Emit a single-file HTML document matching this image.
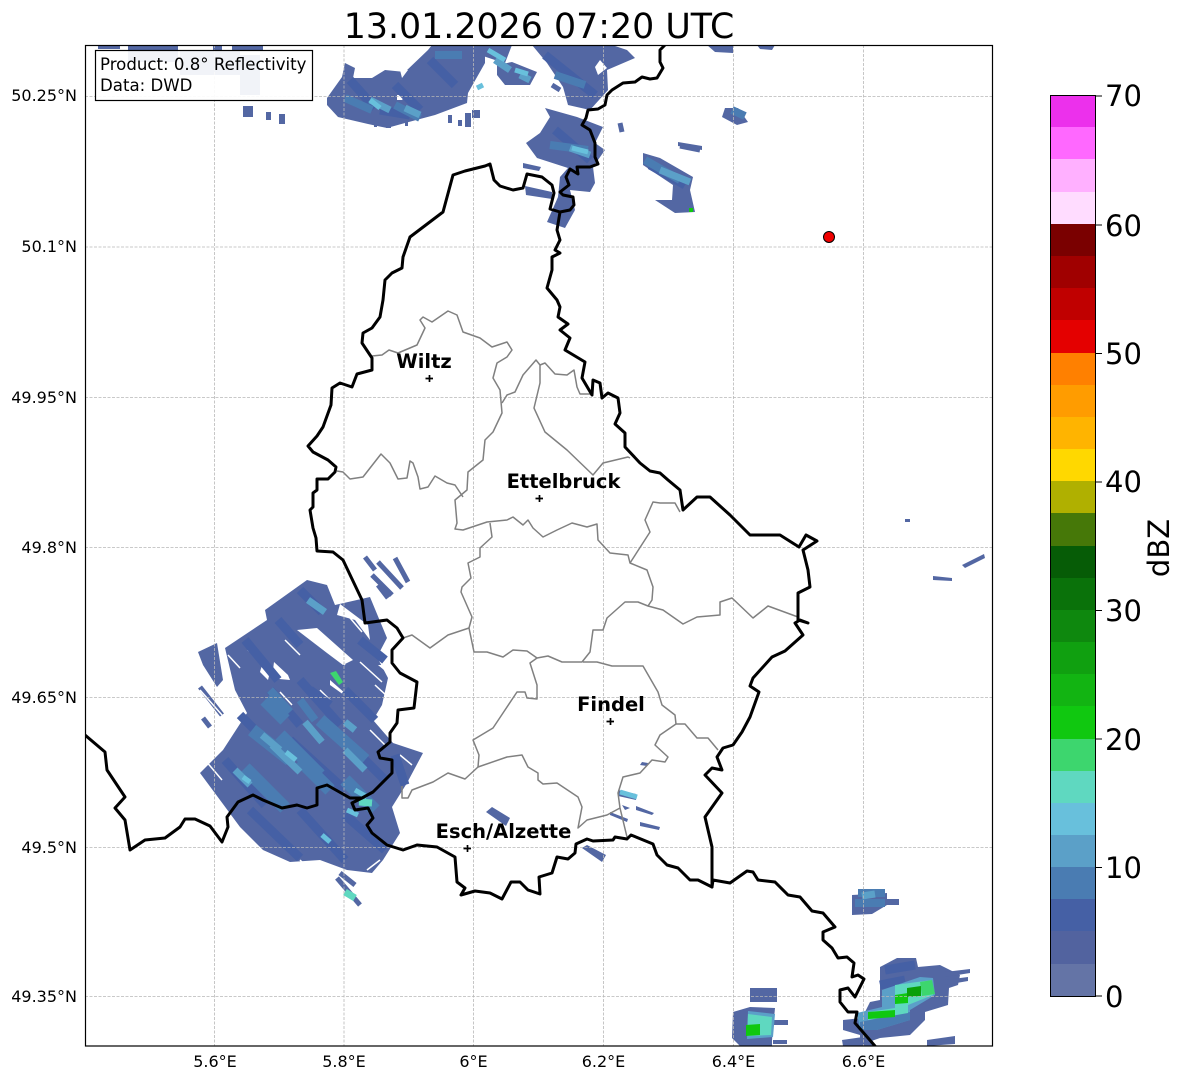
<!DOCTYPE html>
<html><head><meta charset="utf-8"><style>
html,body{margin:0;padding:0;background:#fff}
svg{display:block}
text{font-family:"DejaVu Sans",sans-serif;fill:#000}
</style></head><body>
<svg xmlns="http://www.w3.org/2000/svg" width="1184" height="1081" viewBox="0 0 1184 1081">
<defs><clipPath id="c"><rect x="85" y="45" width="907" height="1001"/></clipPath></defs>
<text x="539" y="38" text-anchor="middle" font-size="34.8">13.01.2026 07:20 UTC</text>
<g clip-path="url(#c)">
<!-- radar base -->
<g fill="#5367a3">
<path d="M307 580L327 585L335 605L370 597L387 638L377 657L388 678L382 705L373 720L393 743L423 753L407 783L392 807L400 833L383 860L372 873L347 870L320 860L290 862L263 850L240 827L200 773L223 750L247 713L235 690L225 648L267 620L265 610Z"/>
<path d="M198 652L217 643L223 680L217 687L203 665Z"/>
<path d="M327 98L342 77L345 63L355 68L353 78L372 78L385 70L405 72L428 50L432 45L485 45L485 63L468 93L467 103L435 115L405 123L387 128L368 124L338 117L327 105Z"/>
<path d="M480 45L512 45L505 63L495 60L480 55Z"/>
<path d="M497 65L512 62L537 72L530 85L505 85L497 75Z"/>
<path d="M532 45L612 45L627 50L635 58L607 70L608 90L590 110L568 105L563 87L547 63Z"/>
<path d="M545 108L577 117L603 127L595 143L605 150L593 167L595 183L590 192L570 190L575 210L565 228L547 222L558 197L560 177L568 168L537 158L526 143L540 133L550 117Z"/>
<path d="M523 163L541 167L539 171L523 168Z"/>
<path d="M525 186L552 192L552 199L526 195Z"/>
<path d="M643 153L660 158L693 177L690 190L695 212L675 213L655 200L672 200L673 185L643 165Z"/>
<path d="M678 142L702 146L702 150L678 146Z"/>
<path d="M722 117L725 108L738 108L748 122L737 125Z"/>
<path d="M707 45L733 45L733 53L715 52Z"/>
<path d="M757 45L775 45L772 50L760 49Z"/>
<rect x="98" y="45" width="22" height="4"/><rect x="128" y="45" width="50" height="5"/><rect x="213" y="45" width="9" height="5"/><rect x="232" y="45" width="31" height="5"/>
<rect x="243" y="106" width="10" height="11"/><rect x="266" y="112" width="5" height="8"/><rect x="279" y="114" width="6" height="10"/>
<rect x="448" y="115" width="4" height="8"/><rect x="458" y="120" width="4" height="6"/><rect x="465" y="113" width="6" height="14"/><rect x="472" y="110" width="8" height="8"/><rect x="374" y="120" width="3" height="7"/><rect x="386" y="120" width="5" height="8"/><rect x="405" y="118" width="3" height="8"/>
<rect x="128" y="50" width="50" height="12"/><rect x="180" y="50" width="60" height="25"/><rect x="240" y="55" width="20" height="40"/>
<path d="M852 895L887 893L887 905L872 914L852 915Z"/>
<rect x="886" y="899" width="13" height="6"/>
<path d="M880 967L897 958L916 958L918 967L940 965L960 975L958 985L949 988L948 1005L925 1012L925 1020L910 1035L880 1038L860 1045L860 1035L843 1030L843 1020L862 1018L870 1002L880 1000Z"/>
<path d="M733 1012L750 1007L775 1008L772 1040L772 1046L740 1046L732 1038Z"/>
<rect x="750" y="988" width="27" height="14"/>
<path d="M773 1020L788 1020L788 1025L773 1025ZM773 1040L787 1040L787 1044L773 1044Z"/>
<path d="M843 1046L842 1040L870 1036L875 1046Z"/>
<path d="M927 1040L955 1036L955 1044L927 1046Z"/>
<path d="M945 972L970 969L970 973L945 977ZM945 980L968 977L968 981L945 985Z"/>
<rect x="905" y="519" width="5" height="3"/><path d="M933 576L952 578L952 581L933 580Z"/><path d="M962 565L984 554L985 558L965 568Z"/>
<path d="M486 812L492 807L510 818L506 826Z"/><path d="M582 848L587 845L606 855L602 862Z"/>
<path d="M642 762L648 763L647 766L640 765Z"/><path d="M618 790L636 794L636 800L618 796Z"/><path d="M622 805L630 808L625 810Z"/><path d="M640 822L660 827L659 830L640 826Z"/><path d="M610 812L628 819L627 822L610 815Z"/><path d="M636 806L654 813L652 815L636 810Z"/>
</g>
<g fill="none" stroke="#5367a3" stroke-width="5">
<path d="M365 557L375 570M372 575L392 595M378 562L402 588M395 558L408 582M378 585L388 598"/>
<path d="M337 878L360 905M340 873L355 885"/>
<path d="M200 687L222 715M203 718L210 727"/>
<path d="M552 85L560 90M680 146L700 150M620 123L622 132"/>
</g>
<!-- holes -->
<g fill="#fff">
<path d="M297 630L317 628L353 660L343 665L327 653Z"/>
<path d="M262 665L270 672L268 680L260 672Z"/>
<path d="M274 662L288 675L290 680L279 679L273 670Z"/>
<path d="M330 680L346 694L344 695L330 685Z"/>
<path d="M337 615L340 604L368 625L370 640L355 620Z"/>
<path d="M378 665L392 665L384 670Z"/>
<path d="M400 70L408 70L402 78Z"/>
<path d="M397 95L406 95L402 100L397 100Z"/>
<path d="M612 85L625 85L615 100L607 92Z"/>
<path d="M600 60L607 68L598 75L595 67Z"/>
</g>
<g fill="none" stroke="#fff" stroke-width="1.5">
<path d="M325 642L345 665M285 640L300 655M248 650L262 660M280 692L292 705M370 730L385 745M380 612L395 630M400 755L412 765M367 870L380 860M200 690L222 715M360 585L378 600M360 662L382 682M320 690L330 700M345 612L362 632M375 685L388 697M228 655L240 668M372 712L382 722M205 760L222 780M245 840L262 855M300 860L318 878"/>
</g>
<!-- darker -->
<g fill="none" stroke="#4560a5" stroke-width="9">
<path d="M300 590L322 612M278 620L300 645M245 640L278 680M270 690L300 725M300 680L340 725M345 690L375 720M240 715L270 745M225 760L265 805M290 740L345 790M345 740L385 780M310 690L330 705M250 810L300 858M300 810L345 860M345 815L385 850M360 640L385 660M395 755L405 785"/>
<path d="M350 80L375 108M395 85L420 110M430 60L455 85M545 55L595 95M555 130L590 160M650 165L685 185M380 110L410 115"/>
<path d="M885 970L915 965M880 985L905 980"/>
</g>
<g fill="none" stroke="#4a7cb2" stroke-width="13">
<path d="M245 768L285 808M280 735L320 775M320 720L365 760M345 780L375 810M300 760L330 790M252 730L290 760M265 700L285 720"/>
</g>
<g fill="none" stroke="#4a7cb2" stroke-width="8">
<path d="M345 98L372 110M395 105L420 118M435 55L462 55M555 75L585 85M550 145L588 150"/>
<path d="M645 160L680 180M745 116L732 110"/>
<path d="M855 903L885 903M858 893L885 893"/>
<path d="M270 690L290 712M300 700L315 720"/>
</g>
<g fill="none" stroke="#5ba0c8" stroke-width="7">
<path d="M272 745L300 772M305 722L322 742M345 722L355 730M235 770L250 785M345 750L365 770M262 735L280 750"/>
<path d="M370 100L390 110M405 108L420 115M495 60L510 70M520 75L530 80M570 148L590 155M660 170L690 182"/>
<path d="M308 600L325 612"/>
<path d="M862 896L875 894"/>
</g>
<g fill="none" stroke="#68c0dc" stroke-width="5">
<path d="M370 100L380 108M488 50L505 60M515 70L528 74M477 88L483 85M572 148L588 152M243 777L250 782M322 835L330 842M347 810L358 815M355 790L367 797M286 752L296 760"/>
<path d="M620 792L637 797"/>
</g>
<!-- SE cells -->
<path fill="#5ba0c8" d="M882 990L920 977L933 978L935 995L910 1010L910 1020L877 1030L860 1030L857 1013L882 1007Z"/>
<path fill="#4a7cb2" d="M860 1022L910 1012L910 1020L877 1030L860 1030Z"/>
<path fill="#5fd8c0" d="M895 985L932 980L933 995L908 1005L908 1013L868 1020L868 1012L895 1008Z"/>
<path fill="#5ba0c8" d="M748 1011L775 1014L773 1037L747 1039Z"/>
<path fill="#5fd8c0" d="M748 1014L772 1017L771 1035L747 1036Z"/>
<g fill="none" stroke="#5fd8c0" stroke-width="7">
<path d="M359 802L372 803M345 892L355 898"/>
</g>
<g fill="#3dd66e"><path d="M330 673L336 671L343 682L339 685Z"/><path d="M920 982L932 980L935 994L922 996Z"/></g>
<g fill="#10c810"><path d="M746 1025L760 1024L760 1035L746 1036Z"/><path d="M868 1012L895 1010L895 1017L868 1019Z"/><path d="M895 995L908 993L908 1003L895 1004Z"/><rect x="689" y="208" width="4" height="4"/></g>
<path fill="#0aa00a" d="M907 988L921 986L921 996L907 997Z"/>
<!-- grid -->
<g stroke="#b8b8b8" stroke-width=".8" stroke-dasharray="3 1.5" fill="none">
<path d="M214.5 45V1046M344 45V1046M473.5 45V1046M603.5 45V1046M733.5 45V1046M863.5 45V1046"/>
<path d="M85 96.5H992M85 247H992M85 397.5H992M85 547.5H992M85 697.5H992M85 847.5H992M85 996.5H992"/>
</g>
<!-- districts -->
<g fill="none" stroke="#808080" stroke-width="1.5" stroke-linejoin="round">
<path d="M372 356L382 355L389 350L398 353L417 345L425 328L420 320L423 317L432 322L448 311L457 315L463 332L480 338L492 347L507 342L512 350L507 357L497 363L493 378L500 390L502 413L493 432L485 440L483 460L468 472L467 490L455 500L457 523L455 529L463 530L487 522L507 520L513 517L523 525L528 520L533 528L543 537L557 530L572 523L587 527L597 524L598 540L610 553L628 555L630 563L647 570L653 587L652 600L648 606"/>
<path d="M337 471L343 472L350 479L363 477L381 454L390 463L398 479L407 478L410 461L413 463L418 477L420 489L428 487L435 476L447 483L455 485L463 497"/>
<path d="M502 403L507 395L515 392L523 375L536 360L540 365L540 383L534 408L545 432L567 450L593 475L603 463L628 457L630 458"/>
<path d="M540 365L545 363L555 374L567 375L574 370L577 387L580 394L590 394"/>
<path d="M490 523L492 537L480 548L480 557L468 563L471 578L462 587L461 592L472 617L469 628L474 652L487 652L503 657L513 650L527 651L537 658L548 656L562 662L582 662L590 652L593 630L603 630L607 618L625 602L638 602L648 606L663 610L683 624L697 617L720 615L720 602L732 598L753 618L768 606L798 617"/>
<path d="M403 638L412 635L430 648L448 635L469 628"/>
<path d="M583 662L597 662L612 666L643 666L658 692L662 705L675 715L676 724L685 724L697 738L708 738L718 750"/>
<path d="M676 724L660 735L655 745L668 757L665 762L652 760L640 773L623 777L618 793L620 808L627 837"/>
<path d="M620 808L607 815L587 820L578 828L582 807L578 797L557 783L543 784L538 780L538 773L528 767L522 755L507 757L478 767L479 755L473 740L493 728L503 713L517 692L525 692L527 698L537 699L537 685L530 663L537 658"/>
<path d="M478 767L465 779L448 773L433 782L412 790L408 798L402 798L402 786"/>
<path d="M680 512L675 503L660 503L653 502L645 520L650 532L630 563"/>
</g>
<!-- borders -->
<g fill="none" stroke="#000" stroke-width="3" stroke-linejoin="round" stroke-linecap="round">
<path d="M665 45L660 50L660 62L663 68L657 78L650 79L642 77L635 82L623 83L612 90L607 95L605 105L598 109L588 110L586 118L582 125L590 130L595 143L595 157L598 164L590 167L577 167L578 174L570 169L566 177L569 185L560 192L563 195L573 197L574 205L570 210L560 212L550 209L554 193L552 185L542 177L527 174L523 188L513 190L500 186L494 180L490 164L485 166L465 171L453 175L443 212L410 237L403 257L402 268L392 273L385 280L383 300L380 317L372 328L363 333L362 343L372 358L372 370L357 374L352 387L340 383L332 388L331 405L323 427L317 436L308 446L313 452L328 460L336 467L335 472L328 479L317 479L317 490L313 493L313 507L310 510L313 528L316 538L317 551L333 552L343 560L362 600L365 623L387 620L397 628L403 638L392 650L392 663L400 673L417 682L414 708L398 710L397 723L390 733L390 742L378 752L380 758L392 760L392 773L373 792L362 798L352 803L355 810L368 808L373 818L367 825L372 833L387 845L403 850L417 845L437 847L455 857L457 882L465 888L461 895L475 891L490 893L502 899L511 882L520 882L528 890L540 894L539 877L552 873L557 857L568 859L575 853L576 844L587 839L593 841L613 840L615 837L627 839L631 835L653 844L657 855L667 865L678 868L690 880L698 880L712 887L713 880L730 883L747 871L753 872L758 880L775 882L788 895L800 897L812 911L823 913L835 927L823 932L823 940L832 948L838 958L847 957L854 963L852 977L858 975L864 979L855 997L848 988L840 990L840 1002L848 1012L857 1012L855 1023L875 1046"/>
<path d="M712 887L712 847L705 817L722 793L705 775L712 768L722 770L717 757L723 748L733 745L742 732L750 717L759 692L750 686L753 678L772 657L785 651L803 635L795 623L800 620L808 623L798 620L798 593L810 587L808 570L803 550L817 541L806 535L799 547L780 535L765 535L750 535L730 515L710 497L697 497L683 510L680 490L668 480L660 473L650 471L640 463L625 447L625 433L615 424L620 413L618 398L608 393L602 398L600 383L593 380L592 395L582 378L585 362L565 350L570 338L560 330L568 324L558 317L560 307L557 300L547 288L552 270L552 257L560 253L555 250L560 240L557 230L560 212"/>
<path d="M85 735L105 752L107 770L125 797L115 808L125 820L130 850L145 840L165 838L180 827L185 819L195 819L210 826L222 842L228 827L227 817L238 802L253 795L263 800L282 808L297 805L307 808L317 805L317 788L327 785L350 798L362 798"/>
</g>
</g>
<!-- markers -->
<g stroke="#000" stroke-width="1.7" fill="none">
<path d="M425.5 378.5H433M429.5 375V382"/><path d="M535.5 498.5H543M539.5 495V502"/><path d="M606.5 721.5H614M610.5 718V725"/><path d="M463.5 848.5H471M467.5 845V852"/>
</g>
<g font-weight="bold" font-size="19.5" text-anchor="middle">
<text x="424" y="368">Wiltz</text><text x="563.5" y="488">Ettelbruck</text><text x="611" y="711">Findel</text><text x="503.5" y="838">Esch/Alzette</text>
</g>
<circle cx="829" cy="237" r="5.5" fill="#f00000" stroke="#000" stroke-width="1"/>
<!-- legend -->
<rect x="95.5" y="50.5" width="217" height="50" fill="#fff" fill-opacity=".92" stroke="#000" stroke-width="1.2"/>
<g font-size="16.6"><text x="100" y="70">Product: 0.8° Reflectivity</text><text x="100" y="91">Data: DWD</text></g>
<rect x="85.5" y="45.5" width="907" height="1000.5" fill="none" stroke="#000" stroke-width="1.2"/>
<!-- axis labels -->
<g font-size="16" text-anchor="end" fill="#111">
<text x="77" y="101">50.25°N</text><text x="77" y="252">50.1°N</text><text x="77" y="403">49.95°N</text><text x="77" y="553">49.8°N</text><text x="77" y="703">49.65°N</text><text x="77" y="853">49.5°N</text><text x="77" y="1002">49.35°N</text>
</g>
<g font-size="16" text-anchor="middle">
<text x="215" y="1067">5.6°E</text><text x="344" y="1067">5.8°E</text><text x="473.5" y="1067">6°E</text><text x="603.5" y="1067">6.2°E</text><text x="733.5" y="1067">6.4°E</text><text x="863.5" y="1067">6.6°E</text>
</g>
<!-- colorbar -->
<g shape-rendering="crispEdges">
<rect x="1051" y="96" width="44" height="32.5" fill="#ec30ec"/><rect x="1051" y="127" width="44" height="33" fill="#ff68ff"/><rect x="1051" y="159" width="44" height="33" fill="#ffb0ff"/><rect x="1051" y="192" width="44" height="33" fill="#ffdcff"/>
<rect x="1051" y="224" width="44" height="33" fill="#7a0000"/><rect x="1051" y="256" width="44" height="33" fill="#a00000"/><rect x="1051" y="288" width="44" height="33" fill="#c00000"/><rect x="1051" y="320" width="44" height="33" fill="#e40000"/>
<rect x="1051" y="353" width="44" height="33" fill="#ff8000"/><rect x="1051" y="385" width="44" height="33" fill="#ff9c00"/><rect x="1051" y="417" width="44" height="33" fill="#ffb400"/><rect x="1051" y="449" width="44" height="33" fill="#ffd800"/>
<rect x="1051" y="481" width="44" height="33" fill="#b0b000"/><rect x="1051" y="513" width="44" height="33" fill="#467808"/><rect x="1051" y="546" width="44" height="33" fill="#065c06"/><rect x="1051" y="578" width="44" height="33" fill="#0a720a"/>
<rect x="1051" y="610" width="44" height="33" fill="#0e880e"/><rect x="1051" y="642" width="44" height="33" fill="#10a010"/><rect x="1051" y="674" width="44" height="33" fill="#12b412"/><rect x="1051" y="706" width="44" height="33" fill="#10c810"/>
<rect x="1051" y="739" width="44" height="33" fill="#3dd66e"/><rect x="1051" y="771" width="44" height="33" fill="#5fd8c0"/><rect x="1051" y="803" width="44" height="33" fill="#68c0dc"/><rect x="1051" y="835" width="44" height="33" fill="#5ba0c8"/>
<rect x="1051" y="867" width="44" height="33" fill="#4a7cb2"/><rect x="1051" y="899" width="44" height="33" fill="#4560a5"/><rect x="1051" y="931" width="44" height="33" fill="#52639f"/><rect x="1051" y="964" width="44" height="32.5" fill="#6474a6"/>
</g>
<rect x="1050.5" y="95.5" width="45" height="901" fill="none" stroke="#000" stroke-width="1"/>
<path d="M1095 96h7M1095 225h7M1095 353.5h7M1095 482h7M1095 610.5h7M1095 739h7M1095 867.5h7M1095 996h7" stroke="#000" stroke-width="1"/>
<g font-size="29">
<text x="1105" y="106">70</text><text x="1105" y="236">60</text><text x="1105" y="364">50</text><text x="1105" y="492">40</text><text x="1105" y="621">30</text><text x="1105" y="750">20</text><text x="1105" y="878">10</text><text x="1105" y="1007">0</text>
</g>
<text transform="translate(1169 548) rotate(-90)" font-size="29" text-anchor="middle">dBZ</text>
</svg>
</body></html>
